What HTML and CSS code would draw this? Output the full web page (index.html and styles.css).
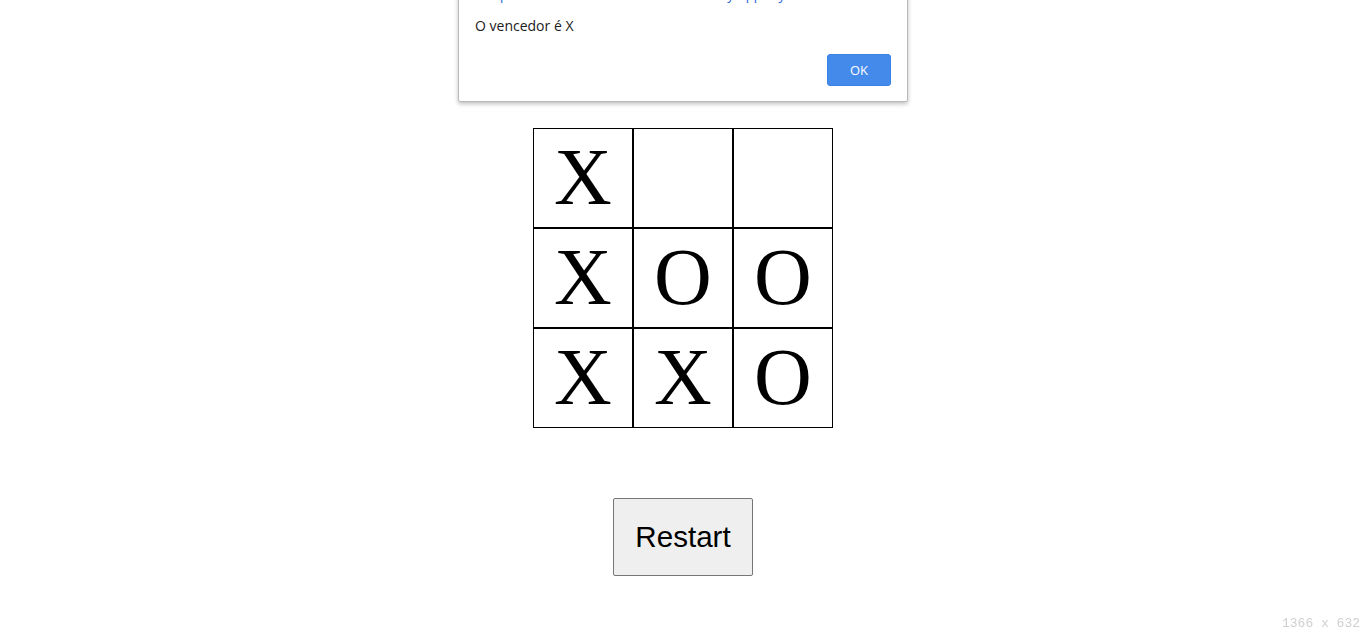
FILE: index.html
```html
<!DOCTYPE html>
<html lang="pt">
<head>
<meta charset="utf-8">
<title>Jogo da Velha</title>
<link rel="stylesheet" href="styles.css">
</head>
<body>
<main class="game">
  <div class="board">
    <div class="cell">X</div>
    <div class="cell"></div>
    <div class="cell"></div>
    <div class="cell">X</div>
    <div class="cell">O</div>
    <div class="cell">O</div>
    <div class="cell">X</div>
    <div class="cell">X</div>
    <div class="cell">O</div>
  </div>
  <button class="restart" type="button">Restart</button>
</main>

<div class="alert" role="alertdialog">
  <div class="alert-title">Um portal em 127.0.0.1:5500/TicTacToe/by/app/my diz</div>
  <div class="alert-message">O vencedor é X</div>
  <div class="alert-actions">
    <button class="alert-ok" type="button">OK</button>
  </div>
</div>

<div class="size-tag">1366 x 632</div>
</body>
</html>
```

FILE: styles.css
```css
html, body {
  margin: 0;
  padding: 0;
  background: #ffffff;
}

body {
  font-family: "Liberation Serif", serif;
  color: #000;
}

.game {
  display: flex;
  flex-direction: column;
  align-items: center;
  padding-top: 128px;
}

.board {
  display: grid;
  grid-template-columns: repeat(3, 100px);
  grid-template-rows: repeat(3, 100px);
}

.cell {
  box-sizing: border-box;
  border: 1px solid #000;
  display: flex;
  align-items: center;
  justify-content: center;
  font-family: "Liberation Serif", serif;
  font-size: 80px;
  line-height: 1;
  padding-bottom: 2px;
}

.restart {
  margin-top: 70px;
  box-sizing: border-box;
  width: 140px;
  height: 78px;
  background: #efefef;
  border: 1px solid #767676;
  border-radius: 2px;
  font-family: "Liberation Sans", Arial, sans-serif;
  font-size: 29.6px;
  color: #000;
  padding: 0;
}

.alert {
  position: absolute;
  top: -16px;
  left: 458px;
  width: 416px;
  box-sizing: content-box;
  padding: 0 16px 15px 16px;
  background: #fff;
  border: 1px solid #b9b9b9;
  border-radius: 2px;
  box-shadow: 0 2px 4px rgba(0, 0, 0, 0.25);
  font-family: "Open Sans", "Noto Sans", sans-serif;
  font-size: 14px;
}

.alert-title {
  height: 20px;
  line-height: 20px;
  font-size: 13px;
  color: #1a5ed1;
  white-space: nowrap;
  overflow: hidden;
}

.alert-message {
  margin-top: 11px;
  line-height: 20px;
  color: #202020;
}

.alert-actions {
  display: flex;
  justify-content: flex-end;
  margin-top: 18px;
}

.alert-ok {
  box-sizing: border-box;
  width: 64px;
  height: 32px;
  border: 1px solid #3c81e6;
  border-radius: 3px;
  background: #448aeb;
  color: #fff;
  font-family: "Open Sans", "Noto Sans", sans-serif;
  font-size: 13px;
  padding: 0;
}

.size-tag {
  position: fixed;
  right: 6px;
  bottom: 1px;
  font-family: "Liberation Mono", monospace;
  font-size: 13px;
  color: #d0d0d0;
}
```
